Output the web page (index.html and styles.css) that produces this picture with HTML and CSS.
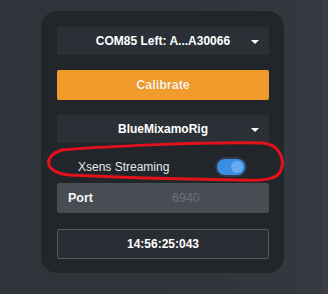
FILE: index.html
```html
<!DOCTYPE html>
<html>
<head>
<meta charset="utf-8">
<link rel="stylesheet" href="styles.css">
</head>
<body>
<div class="page">
  <div class="card">
    <div class="select">
      <span class="select-text">COM85 Left: A...A30066</span>
      <span class="caret"></span>
    </div>
    <button class="btn-calibrate">Calibrate</button>
    <div class="select select-rig">
      <span class="select-text">BlueMixamoRig</span>
      <span class="caret"></span>
    </div>
    <div class="toggle-row">
      <span class="toggle-label">Xsens Streaming</span>
      <span class="toggle"><span class="knob"></span></span>
    </div>
    <div class="port-row">
      <span class="port-label">Port</span>
      <span class="port-value">6940</span>
    </div>
    <div class="time-box">14:56:25:043</div>
  </div>
  <svg class="annotation" width="328" height="294" viewBox="0 0 328 294">
    <path d="M 62 150 C 110 146, 200 142, 262 143 C 280 144, 285 160, 281 170 C 278 180, 262 181, 240 180 C 180 179, 110 177, 70 175 C 44 173, 42 156, 62 150 Z" fill="none" stroke="#e3111b" stroke-width="3"/>
  </svg>
  <div class="edge"></div>
</div>
</body>
</html>
```
FILE: styles.css
```css
html, body {
  margin: 0;
  padding: 0;
}
body {
  width: 328px;
  height: 294px;
  overflow: hidden;
  background: linear-gradient(90deg, #2e343a 0%, #30363c 70%, #353a41 100%);
  font-family: "Liberation Sans", Arial, sans-serif;
}
.page {
  position: relative;
  width: 328px;
  height: 294px;
  padding: 11px 0 0 41px;
  box-sizing: border-box;
}
.card {
  width: 243px;
  height: 262px;
  box-sizing: border-box;
  background: #22262b;
  border-radius: 16px;
  padding: 16px 15px 0 16px;
  display: flex;
  flex-direction: column;
}
.select {
  height: 28px;
  background: #2b3037;
  border-radius: 2px;
  display: flex;
  align-items: center;
  justify-content: center;
  position: relative;
  color: #ffffff;
  font-weight: bold;
  font-size: 12px;
}
.caret {
  position: absolute;
  right: 10px;
  top: 13px;
  width: 0;
  height: 0;
  border-left: 4px solid transparent;
  border-right: 4px solid transparent;
  border-top: 4px solid #ffffff;
}
.btn-calibrate {
  margin-top: 15px;
  height: 30px;
  border: none;
  border-radius: 2px;
  background: #f09b2c;
  color: #fdf3e3;
  font-family: "Liberation Sans", Arial, sans-serif;
  font-weight: bold;
  font-size: 12.5px;
  padding: 0;
  text-shadow: 0 0 1px rgba(120, 60, 0, 0.4);
}
.select-rig {
  margin-top: 15px;
}
.toggle-row {
  height: 40px;
  box-sizing: border-box;
  display: flex;
  align-items: center;
  justify-content: space-between;
  padding: 7px 24px 0 21px;
}
.toggle-label {
  color: #e6e8ea;
  font-size: 12px;
}
.toggle {
  width: 28px;
  height: 16px;
  border-radius: 8px;
  background: #3b8ee2;
  box-shadow: 0 0 0 2px #2d3a4a;
  display: flex;
  align-items: center;
  justify-content: flex-end;
  padding-right: 2px;
  box-sizing: border-box;
}
.knob {
  width: 12px;
  height: 12px;
  border-radius: 50%;
  background: #6aa9ee;
}
.port-row {
  height: 30px;
  background: #494c53;
  border-radius: 2px;
  display: flex;
  align-items: center;
  padding-left: 11px;
}
.port-label {
  color: #f4f6f8;
  font-weight: bold;
  font-size: 12.5px;
  width: 104px;
}
.port-value {
  color: #6c7077;
  font-size: 12.5px;
}
.time-box {
  margin-top: 16px;
  height: 30px;
  box-sizing: border-box;
  border: 1px solid #575b61;
  border-radius: 2px;
  background: #2a2e34;
  color: #ffffff;
  font-weight: bold;
  font-size: 12px;
  display: flex;
  align-items: center;
  justify-content: center;
}
.annotation {
  position: absolute;
  left: 0;
  top: 0;
  pointer-events: none;
}
.edge {
  position: absolute;
  right: 0;
  top: 0;
  width: 5px;
  height: 294px;
  background: #3a3f46;
}
```
